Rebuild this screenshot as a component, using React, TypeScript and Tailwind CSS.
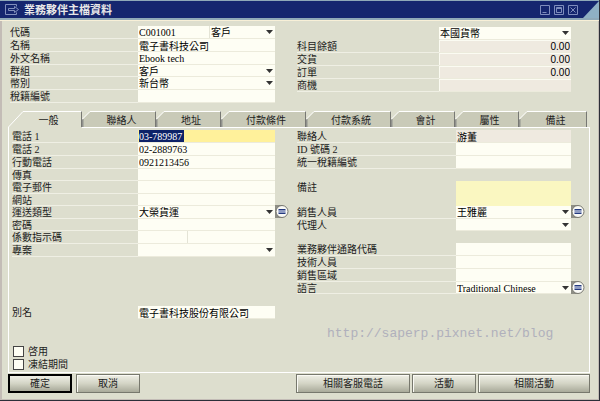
import type { ReactNode } from "react";
import clsx from "clsx";

const TABS = [
  { name: "一般", width: "w-[74px]" },
  { name: "聯絡人", width: "w-[74px]" },
  { name: "地址", width: "w-[65px]" },
  { name: "付款條件", width: "w-[85px]" },
  { name: "付款系統", width: "w-[85px]" },
  { name: "會計", width: "w-16" },
  { name: "屬性", width: "w-16" },
  { name: "備註", width: "w-[68px]" },
];

interface RowProps {
  id: string;
  label: string;
  labelWidth?: string;
  tight?: boolean;
  underline?: boolean;
  children: ReactNode;
}

// Label + field on one line, the label carries a thin light rule
function Row({ id, label, labelWidth = "w-[126px]", tight, underline = true, children }: RowProps) {
  return (
    <div className={clsx("flex", tight ? "h-3" : "h-[13px]")}>
      <label
        htmlFor={id}
        className={clsx("shrink-0 whitespace-nowrap border-b leading-[14px]", labelWidth, underline ? "border-[#efefe4]" : "border-transparent")}
      >
        {label}
      </label>
      <div className="relative flex min-w-0 flex-1 border-b border-[#ecebdc] text-black">{children}</div>
    </div>
  );
}

interface FieldProps {
  id: string;
  value?: string;
  className?: string;
}

function TextField({ id, value = "", className = "bg-[#fefef4]" }: FieldProps) {
  return <input id={id} type="text" defaultValue={value} className={clsx("h-full w-full min-w-0 px-px outline-none", className)} />;
}

function Amount({ id, value = "" }: FieldProps) {
  return (
    <input
      id={id}
      type="text"
      readOnly
      defaultValue={value}
      className="h-full w-full min-w-0 border-l border-t border-[#fbfbf2] bg-[#efeae0] px-px text-right font-['Liberation_Sans','Noto_Sans_CJK_TC',sans-serif] outline-none"
    />
  );
}

function SelectField({ id, value = "" }: FieldProps) {
  return (
    <div className="relative h-full min-w-0 flex-1 bg-[#fefef4]">
      <select id={id} defaultValue={value} className="block h-full w-full appearance-none bg-transparent px-px leading-[13px] outline-none">
        <option value={value}>{value}</option>
      </select>
      <svg viewBox="0 0 7 4" className="pointer-events-none absolute right-0.5 top-1 h-1 w-[7px]" aria-hidden="true">
        <path d="M0 0h7L3.5 4z" fill="#333" />
      </svg>
    </div>
  );
}

function LinkButton({ label }: { label: string }) {
  return (
    <button type="button" aria-label={label} className="absolute -top-px left-full z-10 h-[14px] w-[14px]">
      <svg viewBox="0 0 14 14" className="block h-full w-full" aria-hidden="true">
        <path d="M0 0h7v13H0z" fill="#8d8d84" />
        <circle cx="7" cy="6.5" r="6" fill="#fafaf6" stroke="#77776f" />
        <path d="M3.500 4h7v1.500h-7zM3.500 7.500h7V9h-7z" fill="#243a80" />
        <path d="M3.500 5.500h7v2h-7z" fill="#8f9cc4" />
      </svg>
    </button>
  );
}

function Tab({ name, width, active }: { name: string; width: string; active: boolean }) {
  return (
    <button
      type="button"
      role="tab"
      aria-selected={active}
      className={clsx("flex min-w-0", width, active ? "relative -mb-px h-[17px] bg-[#dddece]" : "h-4")}
    >
      {active ? (
        <svg viewBox="0 0 16 17" className="h-[17px] w-4 shrink-0" aria-hidden="true">
          <path d="M.5 17v-1L15 .5h1" fill="none" stroke="#fff" />
        </svg>
      ) : (
        <svg viewBox="0 0 10 16" className="h-4 w-2.5 shrink-0" aria-hidden="true">
          <path d="M0 16V9L8 1h2v15z" fill="#c9cab8" />
          <path d="M0 16V8h1.500v8z" fill="#90918c" />
          <path d="M0 8.500L8 .5h2" fill="none" stroke="#fff" />
        </svg>
      )}
      <span
        className={clsx(
          "h-4 flex-1 whitespace-nowrap border-r border-t border-r-[#777873] border-t-white pt-px text-center leading-4",
          active ? "pr-2" : "bg-[#c9cab8] pr-1"
        )}
      >
        {name}
      </span>
    </button>
  );
}

function PushButton({ children, width, primary }: { children: string; width: string; primary?: boolean }) {
  return (
    <button
      type="button"
      className={clsx(
        "h-[19px] border bg-linear-to-b from-[#efefe6] via-[#d3d4c5] to-[#a9aa9a] leading-4",
        width,
        primary ? "border-2 border-black" : "border-[#77786d] shadow-[inset_1px_1px_0_#fafaf5]"
      )}
    >
      {children}
    </button>
  );
}

function TitleBar() {
  return (
    <header className="flex h-[21px] flex-col border-b border-[#f8f0d8] bg-[#8fa9b8]">
      <div className="mt-px flex h-[17px] items-center bg-[#15266f] pl-[5px]">
        <svg viewBox="0 0 14 11" className="h-[11px] w-[14px]" fill="none" stroke="#8290bd" aria-hidden="true">
          <path d="M11.500 2.500V.5H.5v10h11v-2" />
          <path d="M3.500 4.500h6V2.500l4 3-4 3v-2h-6z" />
        </svg>
        <h1 className="flex-1 pl-[5px] text-[11px] font-bold leading-4 text-[#e8e8e8]">業務夥伴主檔資料</h1>
        <div className="flex gap-1">
          <button type="button" aria-label="最小化" className="h-2.5 w-2.5">
            <svg viewBox="0 0 10 10" fill="none" stroke="#7f8dbd" aria-hidden="true">
              <path d="M.5.5h9v9h-9zM2.500 7.500h4" />
            </svg>
          </button>
          <button type="button" aria-label="最大化" className="h-2.5 w-2.5">
            <svg viewBox="0 0 10 10" fill="none" stroke="#7f8dbd" aria-hidden="true">
              <path d="M.5.5h9v9h-9zM2.500 2.500h5v5h-5zM2.500 3.500h5" />
            </svg>
          </button>
          <button type="button" aria-label="關閉" className="h-2.5 w-2.5">
            <svg viewBox="0 0 10 10" fill="none" stroke="#7f8dbd" aria-hidden="true">
              <path d="M.5.5h9v9h-9zM2.500 2.500l5 5M7.500 2.500l-5 5" />
            </svg>
          </button>
        </div>
        <svg viewBox="0 0 16 17" className="ml-[5px] h-[17px] w-4" aria-hidden="true">
          <path d="M0 17L16 0v17z" fill="#8fb0c4" />
        </svg>
      </div>
    </header>
  );
}

function GeneralPanel() {
  return (
    <section role="tabpanel" className="border border-white pb-px pl-[3px] pr-[18px] pt-0.5">
      <div className="flex">
        <div className="flex min-w-0 flex-1 flex-col">
          <Row id="tel1" label="電話 1">
            {/* the value is fully selected while the field has the focus */}
            <div className="flex h-full w-full bg-[#fff19b]">
              <input
                id="tel1"
                type="text"
                defaultValue="03-789987"
                className="ml-px h-full w-[45px] bg-[#0d2268] text-white outline-none"
              />
            </div>
          </Row>
          <Row id="tel2" label="電話 2"><TextField id="tel2" value="02-2889763" /></Row>
          <Row id="mobile" label="行動電話"><TextField id="mobile" value="0921213456" /></Row>
          <Row id="fax" label="傳真" tight><TextField id="fax" /></Row>
          <Row id="email" label="電子郵件"><TextField id="email" /></Row>
          <Row id="site" label="網站" tight><TextField id="site" /></Row>
          <Row id="shipping" label="運送類型">
            <SelectField id="shipping" value="大榮貨運" />
            <LinkButton label="運送類型明細" />
          </Row>
          <Row id="password" label="密碼" tight><TextField id="password" /></Row>
          <Row id="factor" label="係數指示碼">
            <div className="w-[50px] border-r border-[#e4e4d6]"><TextField id="factor" /></div>
            <input type="text" aria-label="係數說明" className="h-full min-w-0 flex-1 bg-[#fefef4] outline-none" />
          </Row>
          <Row id="project" label="專案"><SelectField id="project" /></Row>
          <div className="pt-[49px]">
            <Row id="alias" label="別名" underline={false}>
              <TextField id="alias" value="電子書科技股份有限公司" />
            </Row>
          </div>
          <div className="flex flex-col pl-px pt-[26px]">
            <label className="flex h-[13px] items-center gap-1">
              <input type="checkbox" className="h-[11px] w-[11px] appearance-none border border-[#444] bg-[#fefef4]" />
              啓用
            </label>
            <label className="flex h-[13px] items-center gap-1">
              <input type="checkbox" className="h-[11px] w-[11px] appearance-none border border-[#444] bg-[#fefef4]" />
              凍結期間
            </label>
          </div>
        </div>

        <div className="ml-[22px] flex w-[274px] shrink-0 flex-col">
          <Row id="contact" label="聯絡人" labelWidth="w-[159px]"><TextField id="contact" value="游董" className="bg-[#efeae0]" /></Row>
          <Row id="id2" label="ID 號碼 2" labelWidth="w-[159px]"><TextField id="id2" /></Row>
          <Row id="taxid" label="統一稅籍編號" labelWidth="w-[159px]"><TextField id="taxid" /></Row>
          <div className="flex pt-3">
            <label htmlFor="remarks" className="w-[159px] leading-[14px]">備註</label>
            <textarea id="remarks" className="block h-[25px] min-w-0 flex-1 resize-none bg-[#faf7c1] outline-none" />
          </div>
          <Row id="sales" label="銷售人員" labelWidth="w-[159px]">
            <SelectField id="sales" value="王雅麗" />
            <LinkButton label="銷售人員明細" />
          </Row>
          <Row id="agent" label="代理人" labelWidth="w-[159px]" tight underline={false}><SelectField id="agent" /></Row>
          <div className="pt-3">
            <Row id="channel" label="業務夥伴通路代碼" labelWidth="w-[159px]"><TextField id="channel" /></Row>
            <Row id="tech" label="技術人員" labelWidth="w-[159px]"><TextField id="tech" /></Row>
            <Row id="area" label="銷售區域" labelWidth="w-[159px]"><TextField id="area" /></Row>
            <Row id="lang" label="語言" labelWidth="w-[159px]" tight>
              <SelectField id="lang" value="Traditional Chinese" />
              <LinkButton label="語言明細" />
            </Row>
          </div>
          <a href="http://saperp.pixnet.net/blog" className="ml-[30px] mt-8 whitespace-nowrap font-['Liberation_Mono',monospace] text-[13px] leading-4 text-[#b0b0bc]">
            http://saperp.pixnet.net/blog
          </a>
        </div>
      </div>
    </section>
  );
}

export default function App() {
  return (
    <main className="border-b-2 border-r border-[#2c2e38] bg-[#dddece] font-['Liberation_Serif','Noto_Sans_CJK_TC',serif] text-[10px] leading-3 text-[#1c1c1c]">
      <TitleBar />
      <div className="border-b border-l-2 border-r border-[#c3bcb6] pb-1.5 pl-1.5 pr-2 pt-[5px]">
        <div className="flex pl-0.5 pr-[19px]">
          <div className="flex min-w-0 flex-1 flex-col">
            <Row id="code" label="代碼" labelWidth="w-32">
              <div className="w-[72px] border-r border-[#e4e4d6]"><TextField id="code" value="C001001" /></div>
              <SelectField id="kind" value="客戶" />
            </Row>
            <Row id="name" label="名稱" labelWidth="w-32"><TextField id="name" value="電子書科技公司" /></Row>
            <Row id="foreign" label="外文名稱" labelWidth="w-32"><TextField id="foreign" value="Ebook tech" /></Row>
            <Row id="group" label="群組" labelWidth="w-32" tight><SelectField id="group" value="客戶" /></Row>
            <Row id="currency" label="幣別" labelWidth="w-32"><SelectField id="currency" value="新台幣" /></Row>
            <Row id="tax" label="稅籍編號" labelWidth="w-32"><TextField id="tax" /></Row>
          </div>
          <div className="ml-[22px] flex w-[274px] shrink-0 flex-col pt-px">
            <div className="ml-[142px] flex h-[13px] border-b border-[#ecebdc] text-black">
              <SelectField id="local" value="本國貨幣" />
            </div>
            <Row id="balance" label="科目餘額" labelWidth="w-[142px]"><Amount id="balance" value="0.00" /></Row>
            <Row id="delivery" label="交貨" labelWidth="w-[142px]"><Amount id="delivery" value="0.00" /></Row>
            <Row id="orders" label="訂單" labelWidth="w-[142px]"><Amount id="orders" value="0.00" /></Row>
            <Row id="chances" label="商機" labelWidth="w-[142px]"><Amount id="chances" /></Row>
          </div>
        </div>

        <div role="tablist" className="flex pt-2">
          {TABS.map((tab, i) => (
            <Tab key={tab.name} {...tab} active={i === 0} />
          ))}
        </div>
        <GeneralPanel />

        <footer className="flex gap-1 pt-px">
          <PushButton width="w-16" primary>確定</PushButton>
          <PushButton width="w-16">取消</PushButton>
          <div className="ml-auto flex gap-0.5">
            <PushButton width="w-[114px]">相關客服電話</PushButton>
            <PushButton width="w-16">活動</PushButton>
            <PushButton width="w-28">相關活動</PushButton>
          </div>
        </footer>
      </div>
    </main>
  );
}
